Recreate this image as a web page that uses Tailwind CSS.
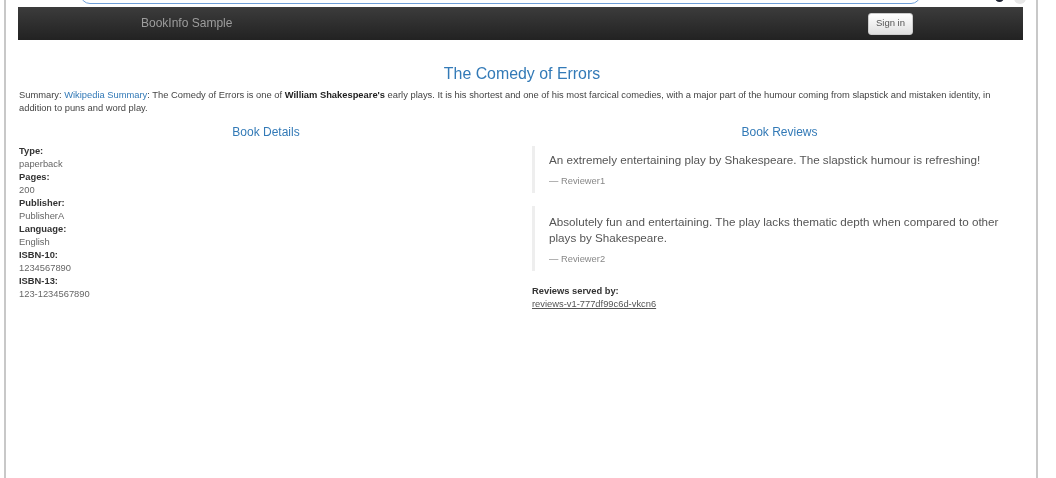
<!DOCTYPE html>
<html lang="en">
<head>
  <meta charset="utf-8">
  <title>BookInfo Sample</title>
  <script src="https://cdn.jsdelivr.net/npm/@tailwindcss/browser@4"></script>
</head>
<body class="bg-white font-['Liberation_Sans',Arial,sans-serif] text-[#333] h-[478px] overflow-hidden">

  <!-- browser window edges -->
  <div class="ml-[4px] w-[1034px] h-[478px] border-l-[2px] border-r-[2px] border-[#c8c8c8] overflow-hidden blur-[0.35px]">

    <!-- address bar, cut off by the crop -->
    <div class="h-[7px] overflow-hidden flex items-end pl-[74px]">
      <div class="w-[841px] h-[20px] shrink-0 border border-[#6f9fd8] rounded-[10px] mb-[3px]"></div>
      <div class="w-[9px] h-[9px] shrink-0 rounded-full bg-[#1f2433] ml-[74px] mb-[5px]"></div>
      <div class="w-[12px] h-[12px] shrink-0 rounded-full bg-[#e8e8e8] ml-[10px] mb-[3px]"></div>
    </div>

    <!-- navbar -->
    <nav class="ml-[12px] w-[1005px] h-[33px] flex items-center bg-gradient-to-b from-[#3c3c3c] to-[#222] pl-[123px]">
      <a class="w-[727px] mb-[2px] text-[12px] text-[#9d9d9d]">BookInfo Sample</a>
      <button class="w-[45px] h-[22px] rounded-[3px] border border-[#ccc] bg-gradient-to-b from-white to-[#e0e0e0] text-[9.5px] text-[#555]">Sign in</button>
    </nav>

    <main class="ml-[13px] w-[990px]">
      <h3 class="mt-[24px] pl-[16px] text-center text-[#337ab7] text-[15.9px] leading-[20px]">The Comedy of Errors</h3>
      <p class="mt-[5px] text-[9.36px] leading-[12.5px] text-[#444]">Summary: <a class="text-[#337ab7]">Wikipedia Summary</a>: The Comedy of Errors is one of <strong class="text-[#222]">William Shakespeare's</strong> early plays. It is his shortest and one of his most farcical comedies, with a major part of the humour coming from slapstick and mistaken identity, in addition to puns and word play.</p>

      <div class="grid grid-cols-[495px_1fr] mt-[11px]">
        <section>
          <h4 class="text-center text-[#337ab7] text-[12px] leading-[14px] ml-[-1px]">Book Details</h4>
          <dl class="mt-[6px] text-[9.36px] leading-[13px]">
            <dt class="font-bold">Type:</dt><dd class="text-[#666]">paperback</dd>
            <dt class="font-bold">Pages:</dt><dd class="text-[#666]">200</dd>
            <dt class="font-bold">Publisher:</dt><dd class="text-[#666]">PublisherA</dd>
            <dt class="font-bold">Language:</dt><dd class="text-[#666]">English</dd>
            <dt class="font-bold">ISBN-10:</dt><dd class="text-[#666]">1234567890</dd>
            <dt class="font-bold">ISBN-13:</dt><dd class="text-[#666]">123-1234567890</dd>
          </dl>
        </section>

        <section class="pl-[19px]">
          <h4 class="text-center text-[#337ab7] text-[12px] leading-[14px] pl-[14px]">Book Reviews</h4>
          <blockquote class="mt-[7px] ml-[-1px] w-[480px] h-[47px] border-l-[3px] border-[#eee] pl-[14px] pt-[6px]">
            <p class="text-[11.67px] leading-[16px] text-[#555]">An extremely entertaining play by Shakespeare. The slapstick humour is refreshing!</p>
            <small class="block mt-[7px] text-[9.36px] leading-[13px] text-[#888]">— Reviewer1</small>
          </blockquote>
          <blockquote class="mt-[13px] ml-[-1px] w-[480px] h-[65px] border-l-[3px] border-[#eee] pl-[14px] pt-[8px]">
            <p class="text-[11.67px] leading-[16px] text-[#555]">Absolutely fun and entertaining. The play lacks thematic depth when compared to other plays by Shakespeare.</p>
            <small class="block mt-[7px] text-[9.36px] leading-[13px] text-[#888]">— Reviewer2</small>
          </blockquote>
          <dl class="mt-[14px] ml-[-1px] text-[9.36px] leading-[12.5px]">
            <dt class="font-bold">Reviews served by:</dt>
            <dd><u class="text-[#555]">reviews-v1-777df99c6d-vkcn6</u></dd>
          </dl>
        </section>
      </div>
    </main>
  </div>
</body>
</html>
